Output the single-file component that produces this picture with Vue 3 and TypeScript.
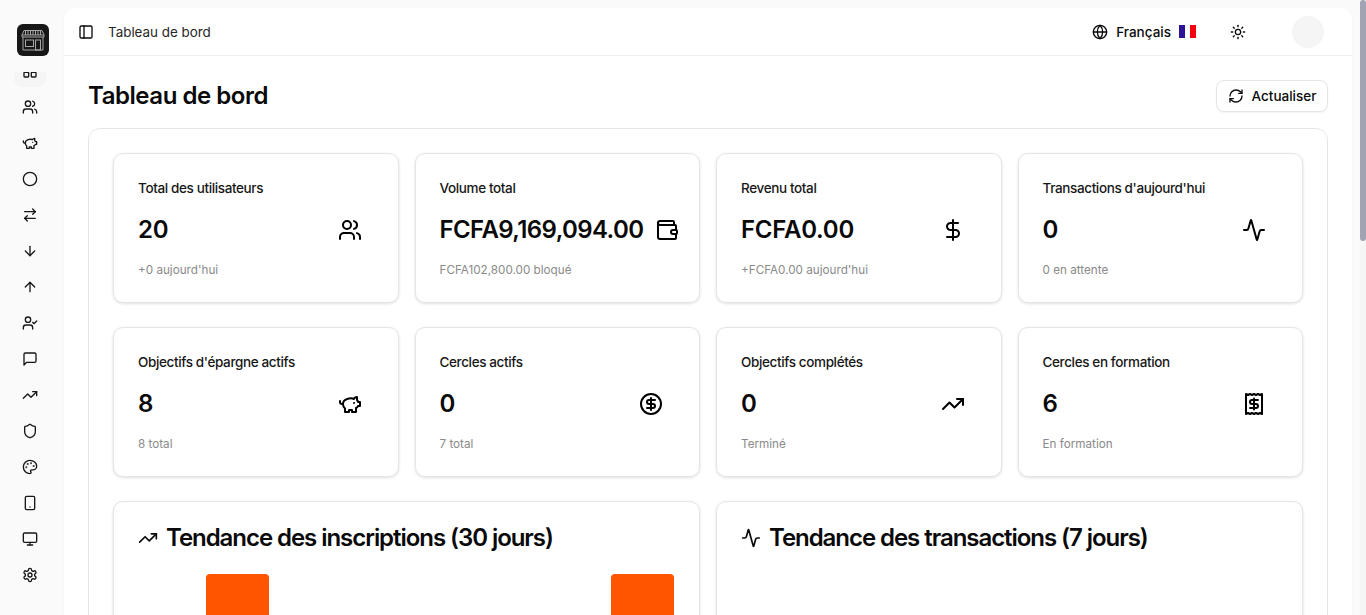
<script setup lang="ts">
const icons: Record<string, string> = {
  grid: '<rect x="3" y="3" width="7" height="7" rx="1"/><rect x="14" y="3" width="7" height="7" rx="1"/><rect x="14" y="14" width="7" height="7" rx="1"/><rect x="3" y="14" width="7" height="7" rx="1"/>',
  users: '<path d="M16 21v-2a4 4 0 0 0-4-4H6a4 4 0 0 0-4 4v2"/><circle cx="9" cy="7" r="4"/><path d="M22 21v-2a4 4 0 0 0-3-3.87"/><path d="M16 3.13a4 4 0 0 1 0 7.75"/>',
  piggy: '<path d="M19 5c-1.5 0-2.8 1.4-3 2-3.5-1.5-11-.3-11 5 0 1.8 0 3 2 4.5V20h4v-2h3v2h4v-4c1-.5 1.7-1 2-2h2v-4h-2c0-1-.5-1.5-1-2V5z"/><path d="M2 9v1c0 1.1.9 2 2 2h1"/><path d="M16 11h.01"/>',
  circle: '<circle cx="12" cy="12" r="10"/>',
  swap: '<path d="m16 3 4 4-4 4"/><path d="M20 7H4"/><path d="m8 21-4-4 4-4"/><path d="M4 17h16"/>',
  down: '<path d="M12 5v14"/><path d="m19 12-7 7-7-7"/>',
  up: '<path d="m5 12 7-7 7 7"/><path d="M12 19V5"/>',
  userCheck: '<path d="M16 21v-2a4 4 0 0 0-4-4H6a4 4 0 0 0-4 4v2"/><circle cx="9" cy="7" r="4"/><polyline points="16 11 18 13 22 9"/>',
  message: '<path d="M21 15a2 2 0 0 1-2 2H7l-4 4V5a2 2 0 0 1 2-2h14a2 2 0 0 1 2 2z"/>',
  trending: '<polyline points="22 7 13.5 15.5 8.5 10.5 2 17"/><polyline points="16 7 22 7 22 13"/>',
  shield: '<path d="M20 13c0 5-3.5 7.5-7.66 8.95a1 1 0 0 1-.67-.01C7.5 20.5 4 18 4 13V6a1 1 0 0 1 1-1c2 0 4.5-1.2 6.24-2.72a1.17 1.17 0 0 1 1.52 0C14.51 3.81 17 5 19 5a1 1 0 0 1 1 1z"/>',
  palette: '<circle cx="13.5" cy="6.5" r=".5"/><circle cx="17.5" cy="10.5" r=".5"/><circle cx="8.5" cy="7.5" r=".5"/><circle cx="6.5" cy="12.5" r=".5"/><path d="M12 2C6.5 2 2 6.5 2 12s4.5 10 10 10c.926 0 1.648-.746 1.648-1.688 0-.437-.18-.835-.437-1.125-.29-.289-.438-.652-.438-1.125a1.64 1.64 0 0 1 1.668-1.668h1.996c3.051 0 5.555-2.503 5.555-5.554C21.965 6.012 17.461 2 12 2z"/>',
  phone: '<rect x="5" y="2" width="14" height="20" rx="2"/><path d="M12 18h.01"/>',
  monitor: '<rect x="2" y="3" width="20" height="14" rx="2"/><path d="M8 21h8"/><path d="M12 17v4"/>',
  settings: '<path d="M12.22 2h-.44a2 2 0 0 0-2 2v.18a2 2 0 0 1-1 1.73l-.43.25a2 2 0 0 1-2 0l-.15-.08a2 2 0 0 0-2.73.73l-.22.38a2 2 0 0 0 .73 2.73l.15.1a2 2 0 0 1 1 1.72v.51a2 2 0 0 1-1 1.74l-.15.09a2 2 0 0 0-.73 2.73l.22.38a2 2 0 0 0 2.73.73l.15-.08a2 2 0 0 1 2 0l.43.25a2 2 0 0 1 1 1.73V20a2 2 0 0 0 2 2h.44a2 2 0 0 0 2-2v-.18a2 2 0 0 1 1-1.73l.43-.25a2 2 0 0 1 2 0l.15.08a2 2 0 0 0 2.73-.73l.22-.39a2 2 0 0 0-.73-2.73l-.15-.08a2 2 0 0 1-1-1.74v-.5a2 2 0 0 1 1-1.74l.15-.09a2 2 0 0 0 .73-2.73l-.22-.38a2 2 0 0 0-2.73-.73l-.15.08a2 2 0 0 1-2 0l-.43-.25a2 2 0 0 1-1-1.73V4a2 2 0 0 0-2-2z"/><circle cx="12" cy="12" r="3"/>',
  panel: '<rect x="3" y="3" width="18" height="18" rx="2"/><path d="M9 3v18"/>',
  globe: '<circle cx="12" cy="12" r="10"/><path d="M12 2a14.5 14.5 0 0 0 0 20 14.5 14.5 0 0 0 0-20"/><path d="M2 12h20"/>',
  sun: '<circle cx="12" cy="12" r="4"/><path d="M12 2v2"/><path d="M12 20v2"/><path d="m4.93 4.93 1.41 1.41"/><path d="m17.66 17.66 1.41 1.41"/><path d="M2 12h2"/><path d="M20 12h2"/><path d="m6.34 17.66-1.41 1.41"/><path d="m19.07 4.93-1.41 1.41"/>',
  refresh: '<path d="M3 12a9 9 0 0 1 9-9 9.75 9.75 0 0 1 6.74 2.74L21 8"/><path d="M21 3v5h-5"/><path d="M21 12a9 9 0 0 1-9 9 9.75 9.75 0 0 1-6.74-2.74L3 16"/><path d="M8 16H3v5"/>',
  wallet: '<path d="M19 7V4a1 1 0 0 0-1-1H5a2 2 0 0 0 0 4h15a1 1 0 0 1 1 1v4h-3a2 2 0 0 0 0 4h3a1 1 0 0 0 1-1v-2a1 1 0 0 0-1-1"/><path d="M3 5v14a2 2 0 0 0 2 2h15a1 1 0 0 0 1-1v-4"/>',
  dollar: '<line x1="12" x2="12" y1="2" y2="22"/><path d="M17 5H9.5a3.5 3.5 0 0 0 0 7h5a3.5 3.5 0 0 1 0 7H6"/>',
  activity: '<path d="M22 12h-2.48a2 2 0 0 0-1.93 1.46l-2.35 8.36a.25.25 0 0 1-.48 0L9.240 2.180a.25.25 0 0 0-.48 0l-2.350 8.360A2 2 0 0 1 4.490 12H2"/>',
  circleDollar: '<circle cx="12" cy="12" r="10"/><path d="M16 8h-6a2 2 0 1 0 0 4h4a2 2 0 1 1 0 4H8"/><path d="M12 18V6"/>',
  receipt: '<path d="M4 2v20l2-1 2 1 2-1 2 1 2-1 2 1 2-1 2 1V2l-2 1-2-1-2 1-2-1-2 1-2-1-2 1Z"/><path d="M16 8h-6a2 2 0 1 0 0 4h4a2 2 0 1 1 0 4H8"/><path d="M12 17.5v-11"/>'
}

const nav: string[] = ['grid', 'users', 'piggy', 'circle', 'swap', 'down', 'up', 'userCheck', 'message', 'trending', 'shield', 'palette', 'phone', 'monitor', 'settings']

interface Stat { title: string; value: string; sub: string; icon: string; tight?: boolean }
const stats: Stat[] = [
  { title: 'Total des utilisateurs', value: '20', sub: "+0 aujourd'hui", icon: 'users' },
  { title: 'Volume total', value: 'FCFA9,169,094.00', sub: 'FCFA102,800.00 bloqué', icon: 'wallet', tight: true },
  { title: 'Revenu total', value: 'FCFA0.00', sub: "+FCFA0.00 aujourd'hui", icon: 'dollar' },
  { title: "Transactions d'aujourd'hui", value: '0', sub: '0 en attente', icon: 'activity' },
  { title: "Objectifs d'épargne actifs", value: '8', sub: '8 total', icon: 'piggy' },
  { title: 'Cercles actifs', value: '0', sub: '7 total', icon: 'circleDollar' },
  { title: 'Objectifs complétés', value: '0', sub: 'Terminé', icon: 'trending' },
  { title: 'Cercles en formation', value: '6', sub: 'En formation', icon: 'receipt' }
]
</script>

<template>
  <div class="app">
    <aside class="sidebar">
      <div class="logo">
        <svg viewBox="0 0 32 32" width="32" height="32" fill="none" stroke="#a8a8a8" stroke-width="1">
          <path d="M7 6.500h18l2 4.500v2H5v-2z" />
          <path d="M5 11h22M8.500 7v4M11 7v4M13.500 7v4M16 7v4M18.500 7v4M21 7v4M23.500 7v4" />
          <path d="M6 13v13h20V13" />
          <rect x="8.500" y="16" width="8" height="6.500" />
          <rect x="18.500" y="16" width="5" height="10" />
        </svg>
      </div>
      <nav class="nav">
        <ul class="nav-list">
          <li v-for="(n, i) in nav" :key="n" class="nav-item" :class="{ active: i === 0 }">
            <svg class="ic" viewBox="0 0 24 24" width="16" height="16" v-html="icons[n]"></svg>
          </li>
        </ul>
      </nav>
    </aside>

    <div class="panel">
      <header class="topbar">
        <div class="top-left">
          <svg class="ic" viewBox="0 0 24 24" width="16" height="16" v-html="icons.panel"></svg>
          <span class="crumb">Tableau de bord</span>
        </div>
        <div class="top-right">
          <div class="lang">
            <svg class="ic" viewBox="0 0 24 24" width="16" height="16" v-html="icons.globe"></svg>
            <span class="lang-name">Français</span>
            <span class="flag"><i class="blue"></i><i class="white"></i><i class="red"></i></span>
          </div>
          <svg class="ic sun" viewBox="0 0 24 24" width="16" height="16" v-html="icons.sun"></svg>
          <div class="avatar"></div>
        </div>
      </header>

      <main class="content">
        <div class="title-row">
          <h1>Tableau de bord</h1>
          <button class="refresh" type="button">
            <svg class="ic" viewBox="0 0 24 24" width="16" height="16" v-html="icons.refresh"></svg>
            Actualiser
          </button>
        </div>

        <section class="outer">
          <div class="stats">
            <article v-for="s in stats" :key="s.title" class="card stat">
              <div class="stat-title">{{ s.title }}</div>
              <div class="stat-main">
                <span class="stat-value" :class="{ tight: s.tight }">{{ s.value }}</span>
                <span class="stat-icon">
                  <svg class="ic" viewBox="0 0 24 24" width="24" height="24" v-html="icons[s.icon]"></svg>
                </span>
              </div>
              <div class="stat-sub">{{ s.sub }}</div>
            </article>
          </div>

          <div class="charts">
            <article class="card chart">
              <h2>
                <svg class="ic" viewBox="0 0 24 24" width="20" height="20" v-html="icons.trending"></svg>
                Tendance des inscriptions (30 jours)
              </h2>
              <div class="bars"><span class="bar"></span><span class="bar"></span></div>
            </article>
            <article class="card chart">
              <h2>
                <svg class="ic" viewBox="0 0 24 24" width="20" height="20" v-html="icons.activity"></svg>
                Tendance des transactions (7 jours)
              </h2>
              <div class="bars"></div>
            </article>
          </div>
        </section>
      </main>
    </div>

    <div class="scrolltrack"><div class="scrollthumb"></div></div>
  </div>
</template>

<style scoped>
.app {
  display: flex;
  height: 615px;
  overflow: hidden;
  background: #fafafa;
  color: #0a0a0a;
  font-family: Inter, "Liberation Sans", sans-serif;
}
.ic {
  fill: none;
  stroke: currentColor;
  stroke-width: 2;
  stroke-linecap: round;
  stroke-linejoin: round;
  flex: none;
  display: block;
}
.sidebar {
  width: 64px;
  flex: none;
  display: flex;
  flex-direction: column;
  align-items: center;
  padding: 24px 0 0;
  box-sizing: border-box;
}
.logo {
  width: 32px;
  height: 32px;
  border-radius: 6px;
  background: #171717;
  margin-bottom: 16px;
  flex: none;
  margin-left: 2px;
}
.logo svg { display: block; }
.nav {
  align-self: stretch;
  flex: 1;
  overflow: hidden;
  padding: 0 2px 0 0;
}
.nav-list {
  list-style: none;
  margin: -17px 0 0;
  padding: 0 14px;
  display: flex;
  flex-direction: column;
  gap: 4px;
}
.nav-item {
  height: 32px;
  width: 32px;
  border-radius: 8px;
  display: flex;
  align-items: center;
  justify-content: center;
  color: #171717;
  flex: none;
}
.nav-item.active { background: #f5f5f5; }
.panel {
  flex: 1;
  min-width: 0;
  margin: 8px 8px 0 0;
  background: #fff;
  border-radius: 12px 12px 0 0;
  box-shadow: 0 1px 2px rgba(0, 0, 0, 0.05);
  overflow: hidden;
}
.topbar {
  height: 48px;
  box-sizing: border-box;
  border-bottom: 1px solid #eeeeee;
  display: flex;
  align-items: center;
  justify-content: space-between;
  padding: 0 28px 0 14px;
}
.top-left { display: flex; align-items: center; gap: 14px; }
.crumb { font-size: 13.4px; color: #262626; }
.top-right { display: flex; align-items: center; }
.lang { display: flex; align-items: center; gap: 8px; }
.lang-name { font-size: 13.5px; font-weight: 500; }
.flag { display: flex; width: 17px; height: 13px; }
.flag i { flex: 1; }
.blue { background: #2d1396; }
.white { background: #fff; }
.red { background: #f5000f; }
.sun { margin-left: 34px; }
.avatar {
  width: 32px;
  height: 32px;
  border-radius: 50%;
  background: #f5f5f5;
  margin-left: 46px;
}
.content { padding: 24px; }
.title-row {
  display: flex;
  align-items: center;
  justify-content: space-between;
  margin-bottom: 16px;
}
h1 {
  margin: 0;
  font-size: 24px;
  line-height: 32px;
  font-weight: 600;
  letter-spacing: -0.45px;
}
.refresh {
  height: 32px;
  width: 112px;
  box-sizing: border-box;
  display: flex;
  align-items: center;
  justify-content: center;
  gap: 8px;
  background: #fff;
  border: 1px solid #e5e5e5;
  border-radius: 8px;
  box-shadow: 0 1px 2px rgba(0, 0, 0, 0.05);
  font: 500 13.5px Inter, "Liberation Sans", sans-serif;
  color: #0a0a0a;
  padding: 0;
}
.outer {
  border: 1px solid #e5e5e5;
  border-radius: 12px;
  padding: 24px;
}
.stats {
  display: grid;
  grid-template-columns: repeat(4, minmax(0, 1fr));
  gap: 24px 16px;
}
.card {
  border: 1px solid #e5e5e5;
  border-radius: 10px;
  background: #fff;
  box-shadow: 0 1px 3px rgba(0, 0, 0, 0.12);
}
.stat { padding: 24px; }
.stat-title {
  font-size: 13.5px;
  line-height: 20px;
  font-weight: 500;
  letter-spacing: -0.37px;
  color: #171717;
}
.stat-main {
  display: flex;
  align-items: center;
  justify-content: space-between;
  margin: 8px 0;
}
.stat-value {
  font-size: 24px;
  line-height: 32px;
  font-weight: 600;
  white-space: nowrap;
  letter-spacing: -0.25px;
}
.stat-value.tight { letter-spacing: -0.6px; }
.stat-icon {
  flex: none;
  width: 48px;
  height: 48px;
  display: flex;
  align-items: center;
  justify-content: center;
  color: #000;
}
.stat-sub {
  font-size: 11.7px;
  line-height: 16px;
  color: #8a8a8a;
}
.charts {
  margin-top: 24px;
  display: grid;
  grid-template-columns: repeat(2, minmax(0, 1fr));
  gap: 24px 16px;
}
.chart { padding: 24px; }
h2 {
  margin: 0;
  display: flex;
  align-items: center;
  gap: 8px;
  font-size: 24px;
  line-height: 24px;
  font-weight: 600;
  letter-spacing: -1.05px;
  white-space: nowrap;
}
.bars {
  margin-top: 24px;
  height: 300px;
  display: flex;
  gap: 341.6px;
  padding-left: 68px;
}
.bar {
  width: 63.4px;
  height: 300px;
  background: #ff5500;
  border-radius: 4px 4px 0 0;
}
.scrolltrack {
  width: 6px;
  flex: none;
  background: #f5f5f5;
}
.scrollthumb {
  height: 241px;
  border-radius: 3px;
  background: #a1a3b3;
}
</style>

<style>
html, body { margin: 0; overflow: hidden; }
</style>
